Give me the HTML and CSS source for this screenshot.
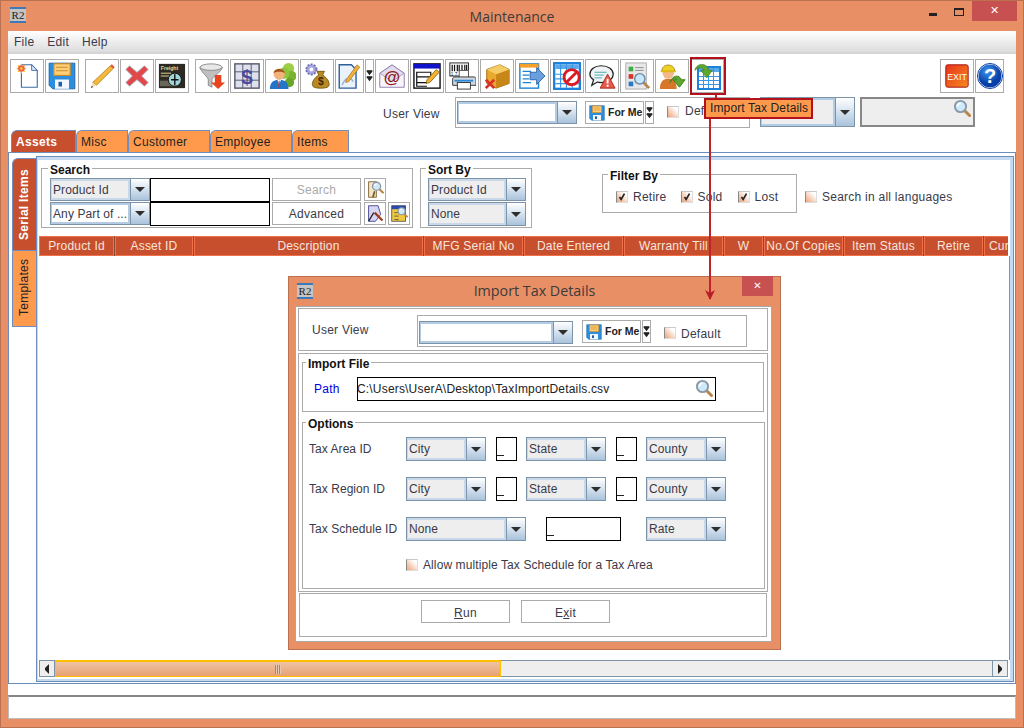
FILE: index.html
```html
<!DOCTYPE html>
<html lang="en">
<head>
<meta charset="utf-8">
<title>Maintenance</title>
<link rel="stylesheet" href="styles.css">
</head>
<body>
<svg class="defs" aria-hidden="true">
  <symbol id="floppy" viewBox="0 0 24 24">
    <path fill="#2b8ede" stroke="#1b63a8" stroke-width=".8" d="M1 1h22v22H4l-3-3z"/>
    <rect x="5" y="1.500" width="14" height="10" fill="#ffcf78" stroke="#c98a2a"/>
    <path stroke="#c98a2a" d="M7 4.500h10M7 7.500h10"/>
    <rect x="6" y="15" width="12" height="8" fill="#f4f8fc"/>
    <rect x="9" y="17" width="3" height="4" fill="#1b5fa8"/>
  </symbol>
  <symbol id="lens" viewBox="0 0 24 24">
    <path stroke="#b9864a" stroke-width="4" stroke-linecap="round" d="M15 15l7 7"/>
    <circle cx="10" cy="10" r="7.500" fill="#cfe9f8" stroke="#8a98a6" stroke-width="2.500"/>
    <path stroke="#fff" stroke-width="2" fill="none" d="M6 10a4 4 0 0 1 4-4"/>
  </symbol>
  <symbol id="dbl" viewBox="0 0 8 14">
    <path fill="#222" d="M0 1h8L4 6zM0 8h8l-4 5z"/>
    <path fill="#222" d="M1 0h6v1H1zM1 7h6v1H1z"/>
  </symbol>
  <symbol id="grid" viewBox="0 0 24 24">
    <rect x="1" y="1" width="22" height="22" fill="#fff" stroke="#1e82dc" stroke-width="2"/>
    <rect x="2" y="2" width="20" height="4" fill="#5aa9ea"/>
    <path stroke="#3b97e6" d="M6.500 2v20M11.500 2v20M16.500 2v20M2 10.500h20M2 14.500h20M2 18.500h20"/>
  </symbol>
  <symbol id="curl" viewBox="0 0 24 24">
    <path fill="#5fa52e" stroke="#3e7d1c" stroke-width=".8" d="M1 10C3 1 15 0 18 10h4l-6.500 9L8 10h4C10 6 5 6 1 10z"/>
  </symbol>
</svg>

<div class="window">
  <header class="titlebar">
    <span class="r2">R<i>2</i></span>
    <h1 class="title">Maintenance</h1>
    <div class="winctl">
      <span class="w-min"></span>
      <span class="w-max"></span>
      <span class="w-close">&#10005;</span>
    </div>
  </header>

  <main class="client">
    <nav class="menu"><span>File</span><span>Edit</span><span>Help</span></nav>

    <div class="toolbar">
      <button class="tb"><svg class="ic" viewBox="0 0 30 30"><path fill="#fff" stroke="#3f6ea8" stroke-width="1.200" d="M9 3h11l6 6v18H9z"/><path fill="#dfe9f6" stroke="#3f6ea8" d="M20 3v6h6z"/><path stroke="#ffb020" stroke-width="1.300" d="M9 2v10M4 7h10M5.500 3.500l7 7M12.500 3.500l-7 7"/><circle cx="9" cy="7" r="3.500" fill="#f4623a"/><circle cx="9" cy="7" r="1.500" fill="#ffc24a"/></svg></button>
      <button class="tb"><svg class="ic" viewBox="0 0 24 24"><use href="#floppy"/></svg></button>
      <button class="tb gap"><svg class="ic" viewBox="0 0 30 30"><path fill="#f6b93a" stroke="#a8741a" stroke-width=".8" d="M24 4l3 3L9 25l-4-3z"/><path fill="#e8472a" d="M24 4l1.500-1.500 3 3L27 7z"/><path fill="#f3dcb8" d="M5 22l4 3-6 3z"/><path fill="#444" d="M3 28l1-2.500 1.500 1.200z"/></svg></button>
      <button class="tb"><svg class="ic" viewBox="0 0 30 30"><path fill="#e2474a" stroke="#a9c0c8" stroke-width="1" stroke-linejoin="round" d="M7 4l8 7 8-7 4 4-7 7 7 7-4 4-8-7-8 7-4-4 7-7-7-7z"/></svg></button>
      <button class="tb"><svg class="ic" viewBox="0 0 30 30"><rect x="1" y="2" width="28" height="26" fill="#2c2a22"/><text x="3" y="9" class="frt">Freight</text><path stroke="#e9dc9a" d="M3 12h11M3 15h9"/><rect x="2" y="20" width="16" height="6" fill="#6b665a"/><circle cx="18" cy="19" r="7" fill="#9fd4d8" stroke="#111"/><path stroke="#111" stroke-width="1.500" d="M18 13v12M14 19h8"/></svg></button>
      <button class="tb gap"><svg class="ic" viewBox="0 0 30 30"><ellipse cx="14" cy="6" rx="12" ry="4" fill="#e8e8e8" stroke="#8a8a8a"/><path fill="#bfbfbf" stroke="#8a8a8a" d="M2 6c3 7 8 9 9 13v6l4 2v-8c1-4 8-6 11-13-4 4-20 4-24 0z"/><path fill="#e8441e" d="M18 14h7v8h4l-7.500 7-7.500-7h4z"/></svg></button>
      <button class="tb"><svg class="ic" viewBox="0 0 30 30"><rect x="2" y="2" width="26" height="26" fill="#dfe0ee" stroke="#55556a" stroke-width="1.500"/><path stroke="#55556a" d="M10.500 2v26M19.500 2v26M2 10.500h26M2 19.500h26"/><text x="15" y="24" class="dollar">$</text></svg></button>
      <button class="tb"><svg class="ic" viewBox="0 0 30 30"><circle cx="22" cy="7" r="6" fill="#9ccf45"/><circle cx="25" cy="15" r="5.500" fill="#77b52f"/><circle cx="17" cy="12" r="6" fill="#8cc63f"/><circle cx="23" cy="22" r="5" fill="#6aa728"/><path fill="#2474c8" d="M2 29c0-8 5-10 10-10s10 2 10 10z"/><path fill="#fff" d="M10 19h4l-2 5z"/><path fill="#d8362a" d="M11.500 20h1l.5 7h-2z"/><circle cx="12" cy="13" r="6" fill="#f2b27c"/><path fill="#a3561c" d="M6 12c0-6 12-6 12 0-3-2-9-2-12 0z"/></svg></button>
      <button class="tb"><svg class="ic" viewBox="0 0 30 30"><circle cx="9" cy="8" r="5.500" fill="#a9a7e0" stroke="#6d6bb0" stroke-width="2" stroke-dasharray="2 1.500"/><circle cx="9" cy="8" r="2" fill="#fff"/><path fill="#b98a24" stroke="#7a5a10" d="M15 10h8l-2 4c5 3 7 7 7 10 0 3-3 4-9 4s-9-1-9-4c0-3 2-7 7-10z"/><text x="19" y="25" class="bag">$</text></svg></button>
      <button class="tb narrow"><svg class="ic" viewBox="0 0 26 30"><path fill="#eaf2fb" stroke="#2c5f9e" stroke-width="1.500" d="M2 3h13l5 5v20H2z"/><path fill="none" stroke="#9cb4cc" stroke-width="1.500" d="M5 25c4-10 10-8 12-4"/><path fill="#f0b03a" stroke="#9c6a14" stroke-width=".7" d="M21 3l3 2.500L12 21l-3 1 .5-3z"/></svg></button>
      <button class="tb arrow"><svg class="ic-dbl" viewBox="0 0 8 14"><use href="#dbl"/></svg></button>
      <button class="tb"><svg class="ic" viewBox="0 0 30 30"><path fill="#e3dcef" stroke="#7a6a9c" d="M2 12L15 3l13 9v15H2z"/><path fill="#f7f4fb" stroke="#a69ac0" d="M2 12l13 9 13-9v15H2z"/><text x="15" y="23" class="at">@</text></svg></button>
      <button class="tb"><svg class="ic" viewBox="0 0 30 30"><rect x="1" y="2" width="28" height="26" fill="#fff" stroke="#111" stroke-width="1.500"/><rect x="1" y="2" width="28" height="5" fill="#1212c8"/><path fill="none" stroke="#111" stroke-width="1.300" d="M4 11h15v5H4zM4 16v6h11M4 22v4h11"/><path fill="#f3b32e" stroke="#7a5206" stroke-width=".8" d="M25 8l3 3-10 11-4 1 1-4z"/></svg></button>
      <button class="tb"><svg class="ic" viewBox="0 0 30 30"><rect x="2" y="1" width="20" height="14" fill="#fff" stroke="#222"/><path stroke="#111" stroke-width="1.300" d="M4.500 3v7M7 3v7M10 3v7M12 3v7M15 3v7M18 3v7M20 3v7"/><text x="3" y="15" class="mini">1 7</text><rect x="12" y="9" width="10" height="10" fill="#fff" stroke="#555"/><path fill="#cfd6de" stroke="#333" d="M7 16h21c1 0 2 1 2 2v7H5v-7c0-1 1-2 2-2z"/><rect x="10" y="22" width="14" height="7" fill="#fff" stroke="#333"/><rect x="7" y="19" width="20" height="2" fill="#2a8ad8"/></svg></button>
      <button class="tb"><svg class="ic" viewBox="0 0 30 30"><path fill="#e8a92e" stroke="#9c6e10" d="M4 8l14-5 10 5v15L14 28 4 23z"/><path fill="#c98618" d="M14 13l14-5v15L14 28z"/><path fill="#f6cc66" d="M4 8l10 5 14-5-10-5z"/><path stroke="#d8322a" stroke-width="3" d="M3 19l9 9M12 19l-9 9"/></svg></button>
      <button class="tb"><svg class="ic" viewBox="0 0 30 30"><rect x="2" y="2" width="20" height="26" fill="#fff" stroke="#1e82d2" stroke-width="1.500"/><rect x="2" y="2" width="20" height="4" fill="#f5a028"/><path stroke="#1e82d2" stroke-width="1.300" d="M5 10h9M5 14h7M5 18h7M5 22h9"/><path fill="#6aa0e0" stroke="#2c63a8" d="M13 11h7V6l9 9-9 9v-5h-7z"/></svg></button>
      <button class="tb"><svg class="ic" viewBox="0 0 24 24"><use href="#grid"/><circle cx="16" cy="13" r="6.500" fill="#fff" stroke="#dc1c24" stroke-width="2.500"/><path stroke="#dc1c24" stroke-width="2.500" d="M12 17l8-8"/></svg></button>
      <button class="tb"><svg class="ic" viewBox="0 0 30 30"><path fill="#eef3f7" stroke="#222" stroke-width="1.300" d="M14 4c8 0 13 4 13 9s-5 9-13 9c-2 0-3 0-4-.5L4 25l2-6c-3-2-4-4-4-6 0-5 5-9 12-9z"/><path stroke="#4aa8a8" d="M7 11h13M7 14h10M7 17h8"/><path fill="#e85a4a" stroke="#a82a1a" d="M21 13l8 15H13z"/><path stroke="#fff" stroke-width="2" d="M21 18v5M21 24.500v2"/></svg></button>
      <button class="tb"><svg class="ic" viewBox="0 0 30 30"><rect x="3" y="1" width="22" height="28" fill="#e8e8e8" stroke="#aaa"/><rect x="6" y="5" width="5" height="5" fill="#3fae49"/><rect x="6" y="13" width="5" height="5" fill="#d8342a"/><rect x="6" y="21" width="5" height="5" fill="#2a7ac8"/><path stroke="#8a8a8a" d="M13 6h9M13 9h9M13 14h5M13 22h5"/><path stroke="#b9864a" stroke-width="3" d="M22 22l6 6"/><circle cx="18" cy="18" r="5.500" fill="#c8e8fa" stroke="#6a8aa8" stroke-width="1.500"/></svg></button>
      <button class="tb"><svg class="ic" viewBox="0 0 30 30"><path fill="#d8762a" d="M2 29c0-8 4-11 9-11s9 3 9 11z"/><circle cx="11" cy="12" r="6" fill="#f2b88a"/><path fill="#f0d028" stroke="#a88a10" d="M4 10c0-9 14-9 14 0z"/><rect x="3" y="9" width="16" height="2" fill="#e0b818"/><path fill="#5fa52e" stroke="#3e7d1c" d="M13 22c2-8 10-9 12-3h4l-6 8-7-8h4c-2-2-5-1-7 3z"/></svg></button>
      <button class="tb"><svg class="ic" viewBox="0 0 28 28"><svg x="4" y="4" width="24" height="24"><use href="#grid"/></svg><svg x="0" y="0" width="22" height="20"><use href="#curl"/></svg></svg></button>
      <div class="tb-right">
        <button class="tb"><svg class="ic" viewBox="0 0 30 30"><defs><linearGradient id="ex" x1="0" y1="0" x2="1" y2="1"><stop offset="0" stop-color="#e8341c"/><stop offset="1" stop-color="#f58a20"/></linearGradient></defs><rect x="3" y="3" width="24" height="24" rx="2" fill="url(#ex)" stroke="#a01010"/><text x="15" y="19" class="exit">EXIT</text></svg></button>
        <button class="tb help"><svg class="ic-help" viewBox="0 0 26 26"><defs><radialGradient id="hp" cx=".4" cy=".3"><stop offset="0" stop-color="#3a9af0"/><stop offset="1" stop-color="#0a3fa8"/></radialGradient></defs><circle cx="13" cy="13" r="12" fill="url(#hp)" stroke="#fff" stroke-width="1"/><circle cx="13" cy="13" r="12.500" fill="none" stroke="#0a3fa8" stroke-width="1"/><text x="13" y="20" class="qm">?</text></svg></button>
      </div>
    </div>

    <div class="viewrow">
      <span class="lbl uv">User View</span>
      <div class="viewbox vb-main">
        <div class="combo edit w120 h23"><span class="val"></span><span class="drop"></span></div>
        <div class="forme fm-main"><svg class="fl" viewBox="0 0 24 24"><use href="#floppy"/></svg><b>For Me</b></div>
        <div class="fm-arrow"><svg class="ic-dbl" viewBox="0 0 8 14"><use href="#dbl"/></svg></div>
        <span class="chk c-main"></span><span class="lbl">Default</span>
      </div>
      <div class="combo dis w95 h30"><span class="val"></span><span class="drop"></span></div>
      <div class="lookup"><svg class="lk" viewBox="0 0 24 24"><use href="#lens"/></svg></div>
    </div>

    <div class="tabs">
      <span class="tab t-on t65">Assets</span>
      <span class="tab t52">Misc</span>
      <span class="tab t82">Customer</span>
      <span class="tab t82">Employee</span>
      <span class="tab t57">Items</span>
    </div>

    <section class="panel">
      <aside class="side">
        <span class="stab s-on">Serial Items</span>
        <span class="stab s-off">Templates</span>
      </aside>
      <div class="content">
        <div class="inner">
          <div class="filters">
            <div class="group g-search">
              <span class="legend">Search</span>
              <div class="srow">
                <div class="combo w100 h23"><span class="val">Product Id</span><span class="drop"></span></div>
                <div class="field f120"></div>
                <button class="btn b-search muted">Search</button>
                <button class="mini-ic"><svg class="ic-s" viewBox="0 0 22 22"><path fill="#f4e4c8" stroke="#7a5a2a" d="M3 2h9v18H3z"/><path stroke="#7a5a2a" stroke-width="2" d="M8 20l2-7"/><svg x="6" y="1" width="15" height="15"><use href="#lens"/></svg></svg></button>
              </div>
              <div class="srow">
                <div class="combo edit w100 h23 c-any"><span class="val">Any Part of ...</span><span class="drop"></span></div>
                <div class="field f120"></div>
                <button class="btn b-search">Advanced</button>
                <button class="mini-ic"><svg class="ic-s" viewBox="0 0 22 22"><path fill="#d8d4f4" stroke="#3a3a8a" d="M3 2h11l3 10-6 8H3z"/><path stroke="#9a3a1a" stroke-width="2.500" d="M10 10l9 9"/><path stroke="#222" stroke-width="1.500" d="M3 20l6-10"/></svg></button>
                <button class="mini-ic"><svg class="ic-s" viewBox="0 0 22 22"><rect x="2" y="2" width="16" height="18" fill="#f0c83a" stroke="#555"/><rect x="2" y="2" width="16" height="4" fill="#2a4ab0"/><path stroke="#555" d="M5 10h5M5 14h5M5 18h5"/><svg x="8" y="3" width="13" height="13"><use href="#lens"/></svg></svg></button>
              </div>
            </div>
            <div class="group g-sort">
              <span class="legend">Sort By</span>
              <div class="combo w98 h23"><span class="val">Product Id</span><span class="drop"></span></div>
              <div class="combo w98 h24"><span class="val">None</span><span class="drop"></span></div>
            </div>
            <div class="group g-filter">
              <span class="legend">Filter By</span>
              <span class="chk on c-a"><svg viewBox="0 0 12 12"><path d="M3 6l2 3 4-7" fill="none" stroke="#222" stroke-width="2"/></svg></span><span class="lbl">Retire</span>
              <span class="chk on c-b"><svg viewBox="0 0 12 12"><path d="M3 6l2 3 4-7" fill="none" stroke="#222" stroke-width="2"/></svg></span><span class="lbl">Sold</span>
              <span class="chk on c-b2"><svg viewBox="0 0 12 12"><path d="M3 6l2 3 4-7" fill="none" stroke="#222" stroke-width="2"/></svg></span><span class="lbl">Lost</span>
            </div>
            <div class="alllang"><span class="chk"></span><span class="lbl">Search in all languages</span></div>
          </div>

          <div class="thead">
            <span class="th c75">Product Id</span>
            <span class="th c78">Asset ID</span>
            <span class="th c229">Description</span>
            <span class="th c99">MFG Serial No</span>
            <span class="th c99">Date Entered</span>
            <span class="th c99">Warranty Till</span>
            <span class="th c39">W</span>
            <span class="th c79">No.Of Copies</span>
            <span class="th c79">Item Status</span>
            <span class="th c59">Retire</span>
            <span class="th c24">Cur</span>
          </div>
          <div class="tbody"></div>
          <div class="hscroll">
            <span class="sbtn"><i class="tri-l"></i></span>
            <span class="thumb"><i class="grip"></i></span>
            <span class="track"></span>
            <span class="sbtn"><i class="tri-r"></i></span>
          </div>
        </div>
      </div>
    </section>

    <div class="status"></div>
  </main>
</div>

<div class="dlg">
  <header class="dlg-title">
    <span class="r2">R<i>2</i></span>
    <h2 class="dlg-name">Import Tax Details</h2>
    <span class="dlg-close">&#10005;</span>
  </header>
  <div class="dlg-inner">
    <div class="p1">
      <span class="lbl p1-lbl">User View</span>
      <div class="viewbox vb-dlg">
        <div class="combo edit w154 h23"><span class="val"></span><span class="drop"></span></div>
        <div class="forme fm-dlg"><svg class="fl" viewBox="0 0 24 24"><use href="#floppy"/></svg><b>For Me</b></div>
        <div class="fm-arrow"><svg class="ic-dbl" viewBox="0 0 8 14"><use href="#dbl"/></svg></div>
        <span class="chk c-dlg"></span><span class="lbl low">Default</span>
      </div>
    </div>
    <div class="p2">
      <div class="group g-import">
        <span class="legend">Import File</span>
        <span class="lbl path">Path</span>
        <div class="field f-path"><span class="path-val">C:\Users\UserA\Desktop\TaxImportDetails.csv</span><svg class="lk2" viewBox="0 0 24 24"><use href="#lens"/></svg></div>
      </div>
      <div class="group g-opts">
        <span class="legend">Options</span>
        <div class="orow">
          <span class="lbl ol">Tax Area ID</span>
          <div class="combo w80 h24"><span class="val">City</span><span class="drop"></span></div>
          <div class="field f21 m10"></div>
          <div class="combo w80 h24 m9"><span class="val">State</span><span class="drop"></span></div>
          <div class="field f21 m10"></div>
          <div class="combo w80 h24 m9"><span class="val">County</span><span class="drop"></span></div>
        </div>
        <div class="orow">
          <span class="lbl ol">Tax Region ID</span>
          <div class="combo w80 h24"><span class="val">City</span><span class="drop"></span></div>
          <div class="field f21 m10"></div>
          <div class="combo w80 h24 m9"><span class="val">State</span><span class="drop"></span></div>
          <div class="field f21 m10"></div>
          <div class="combo w80 h24 m9"><span class="val">County</span><span class="drop"></span></div>
        </div>
        <div class="orow">
          <span class="lbl ol">Tax Schedule ID</span>
          <div class="combo w120b h24"><span class="val">None</span><span class="drop"></span></div>
          <div class="field f75 m20"></div>
          <div class="combo w80 h24 m25"><span class="val">Rate</span><span class="drop"></span></div>
        </div>
        <div class="orow-chk"><span class="chk"></span><span class="lbl">Allow multiple Tax Schedule for a Tax Area</span></div>
      </div>
    </div>
    <div class="p3">
      <button class="btn b-dlg"><u>R</u>un</button>
      <button class="btn b-dlg">E<u>x</u>it</button>
    </div>
  </div>
</div>

<svg class="leader" viewBox="0 0 30 210" aria-hidden="true">
  <path stroke="#c0232c" stroke-width="2" d="M17 0v6M11 20v184"/>
  <path fill="#b81c26" d="M6 195l5 3 5-3-5 10z"/>
</svg>
<div class="hl-frame"></div>
<div class="hl-tip">Import Tax Details</div>
</body>
</html>
```

FILE: styles.css
```css
* { box-sizing: border-box; }
html, body { margin: 0; padding: 0; }
body {
  width: 1024px; height: 728px; overflow: hidden; position: relative;
  font: 12px/1 "Liberation Sans", Arial, sans-serif; color: #3a3a48;
}
.defs { width: 0; height: 0; position: absolute; }
button { font: inherit; color: inherit; margin: 0; padding: 0; background: #fff; cursor: default; }
h1, h2 { margin: 0; font-weight: 400; }

.window {
  width: 1024px; height: 728px; display: flex; flex-direction: column;
  background: #e98f66; border: 1px solid #b9714f; padding: 0 7px 8px;
}
.titlebar { height: 30px; margin: 0 -7px; position: relative; display: flex; align-items: center; justify-content: center; flex: none; }
.r2 {
  position: absolute; left: 9px; top: 6px; width: 16px; height: 16px;
  background: #c4c4c4; border-top: 2px solid #3f78b8; border-bottom: 2px solid #3f78b8;
  font: 11px/12px "Liberation Serif", serif; color: #222; text-align: center;
}
.r2 i { font-style: normal; }
.title { font: 14px "Open Sans", sans-serif; color: #3b3b3b; }
.winctl { position: absolute; right: 6px; top: 0; display: flex; align-items: flex-start; }
.w-min { width: 8px; height: 3px; background: #222; margin: 12px 17px 0 0; }
.w-max { width: 10px; height: 8px; border: 1px solid #222; border-top-width: 2px; margin: 7px 8px 0 0; }
.w-close { width: 45px; height: 20px; background: #c75050; color: #fff; text-align: center; font: bold 11px/20px "DejaVu Sans", sans-serif; }

.client { flex: 1; background: #fff; display: flex; flex-direction: column; min-height: 0; }
.menu {
  height: 23px; flex: none; display: flex; gap: 0; padding-left: 6px; align-items: center;
  background: linear-gradient(#fff, #dcdcdc); border-bottom: 2px solid #d4d4d4;
}
.menu span { margin-right: 13px; letter-spacing: .25px; }

.toolbar { display: flex; gap: 1px; padding: 5px 12px 0 2px; flex: none; height: 39px; }
.tb { width: 34px; height: 34px; border: 1px solid #ababab; display: flex; align-items: center; justify-content: center; flex: none; }
.tb.gap { margin-left: 5px; }
.tb.narrow { width: 29px; }
.tb.arrow { width: 9px; }
.tb.help { width: 29px; }
.tb-right { margin-left: auto; display: flex; gap: 1px; }
.ic { width: 28px; height: 28px; display: block; }
.ic-help { width: 26px; height: 26px; }
.ic-dbl { width: 7px; height: 12px; display: block; }
.ic-s { width: 19px; height: 19px; display: block; }
.frt { font: bold 5.500px "Liberation Sans", sans-serif; fill: #e9dc9a; }
.dollar { font: bold 22px "Liberation Sans", sans-serif; fill: #4a4a9a; text-anchor: middle; }
.bag { font: bold 11px "Liberation Sans", sans-serif; fill: #3a2a08; text-anchor: middle; }
.at { font: bold 18px "Liberation Sans", sans-serif; fill: #8e1c1c; text-anchor: middle; }
.mini { font: 5px "Liberation Sans", sans-serif; fill: #111; }
.exit { font: 9.500px "Liberation Sans", sans-serif; fill: #fff; text-anchor: middle; }
.qm { font: bold 20px "Liberation Sans", sans-serif; fill: #fff; text-anchor: middle; }

.lbl { letter-spacing: .25px; white-space: nowrap; }

.viewrow { display: flex; height: 33px; margin-top: 4px; flex: none; align-items: flex-start; }
.uv { margin: 11px 8px 0 375px; width: 64px; }
.viewbox { border: 1px solid #ababab; display: flex; align-items: flex-start; }
.vb-main { width: 295px; height: 31px; padding: 3px 0 0 1px; }
.vb-dlg { width: 330px; height: 32px; padding: 5px 0 0 1px; }
.forme {
  width: 59px; height: 23px; border: 1px solid #ababab; display: flex; align-items: center; padding-left: 3px; gap: 3px;
  font-size: 10.500px; color: #222; white-space: nowrap; overflow: hidden;
}
.fm-main { margin-left: 8px; }
.fm-dlg { margin: -1px 0 0 9px; }
.fl { width: 16px; height: 16px; flex: none; }
.fm-arrow { width: 9px; height: 23px; border: 1px solid #ababab; margin-left: 1px; display: flex; align-items: center; justify-content: center; }
.fm-dlg + .fm-arrow { margin-top: -1px; }
.vb-main .lbl { margin: 4px 0 0 6px; }
.low { margin: 7px 0 0 5px; }
.chk {
  width: 12px; height: 12px; display: block; flex: none;
  background: linear-gradient(45deg, #eda47a, #fff 80%);
  border-left: 1px solid #8a8a8a; border-top: 1px solid #c8c8c8; border-right: 1px solid #ddd; border-bottom: 1px solid #ddd;
}
.chk svg { display: block; width: 10px; height: 10px; }
.c-main { margin: 5px 0 0 13px; }
.c-dlg { margin: 6px 0 0 13px; }

.combo { display: flex; border: 1px solid #7d93a8; background: #eee; flex: none; }
.combo .val {
  flex: 1; min-width: 0; border: 2px solid #c9d8e8; border-left-width: 1px; padding-left: 1px; display: flex; align-items: center;
  letter-spacing: .1px; white-space: nowrap; overflow: hidden;
}
.combo.edit { background: #fff; }
.combo.edit .val { border-color: #b4cbe4; }
.combo.dis .val { border-color: #b4cbe4; }
.combo .drop {
  width: 19px; flex: none; border-left: 1px solid #7d93a8; background: linear-gradient(#fff, #a9c3dc);
  display: flex; align-items: center; justify-content: center;
}
.combo .drop::after { content: ""; border: 5px solid transparent; border-top: 5px solid #2e2e2e; border-bottom: 0; }
.w80 { width: 80px; } .w95 { width: 95px; } .w98 { width: 98px; } .w100 { width: 100px; }
.w120 { width: 120px; } .w120b { width: 120px; } .w154 { width: 154px; }
.h23 { height: 23px; } .h24 { height: 24px; } .h30 { height: 30px; }
.viewrow .w95 { margin-left: 10px; }
.lookup { width: 115px; height: 30px; margin-left: 5px; background: #eee; border: 2px solid #888; position: relative; display: flex; justify-content: flex-end; }
.lk { width: 18px; height: 18px; margin-right: 2px; }

.tabs { height: 22px; display: flex; padding-left: 3px; flex: none; }
.tab {
  border: 1px solid #6f8fc0; border-bottom: 0; border-left-width: 1px; border-radius: 6px 0 0 0;
  background: #ff9a4d; color: #222; padding: 5px 0 0 4px; letter-spacing: .3px; height: 22px; white-space: nowrap;
}
.t-on { background: #c84f2e; color: #fff; font-weight: 700; padding-left: 4px; }
.t65 { width: 65px; } .t52 { width: 52px; } .t82 { width: 82px; } .t57 { width: 57px; }

.panel { flex: none; height: 532px; border: 1px solid #6b8dbb; display: flex; background: #fff; }
.side { width: 27px; padding: 5px 0 0 3px; display: flex; flex-direction: column; flex: none; }
.stab {
  writing-mode: vertical-rl; transform: rotate(180deg); width: 24px; text-align: center;
  border: 1px solid #6f8fc0; border-left: 0; border-radius: 0 0 6px 0; letter-spacing: .3px; line-height: 22px;
}
.s-on { height: 93px; background: #c84f2e; color: #fff; font-weight: 700; position: relative; z-index: 1; }
.s-off { height: 80px; margin-top: -4px; background: #ff9a4d; color: #222; }
.content {
  flex: 1; margin: 3px 1px 1px 0; border: 1px solid #6b8dbb; background: #c5d9f0; padding: 3px 3px 2px 1px;
  display: flex; min-width: 0;
}
.inner { flex: 1; background: #fff; display: flex; flex-direction: column; min-width: 0; }
.filters { height: 76px; display: flex; align-items: flex-start; flex: none; }
.group { border: 1px solid #ababab; position: relative; flex: none; }
.legend {
  position: absolute; left: 5px; top: -5px; background: #fff; padding: 0 2px; font-weight: 700; color: #111; line-height: 12px;
}
.g-search { width: 372px; height: 60px; margin: 8px 0 0 3px; padding: 9px 0 0 8px; }
.g-search .legend { left: 6px; }
.srow { display: flex; align-items: flex-start; }
.field { border: 1px solid #000; background: #fff; flex: none; color: #222; }
.f120 { width: 120px; height: 24px; }
.btn { border: 1px solid #ababab; flex: none; text-align: center; letter-spacing: .25px; }
.b-search { width: 89px; height: 23px; margin-left: 2px; }
.muted { color: #aaa; }
.mini-ic { width: 22px; height: 23px; border: 1px solid #ababab; margin-left: 3px; display: flex; align-items: center; justify-content: center; flex: none; }
.mini-ic + .mini-ic { margin-left: 2px; }
.g-sort { width: 112px; height: 60px; margin: 8px 0 0 7px; padding: 9px 0 0 7px; display: flex; flex-direction: column; gap: 1px; }
.g-filter { width: 195px; height: 39px; margin: 14px 0 0 70px; padding-top: 7px; display: flex; align-items: center; }
.g-filter .lbl { margin-left: 5px; }
.c-a { margin-left: 13px; }
.c-b { margin-left: 14px; }
.c-b2 { margin-left: 15px; }
.alllang { display: flex; margin: 31px 0 0 8px; align-items: center; gap: 5px; }

.thead { height: 20px; margin-left: 1px; width: 969px; display: flex; gap: 1px; background: #8a4a36; flex: none; overflow: hidden; }
.th {
  background: #c84f2e; border: 1px solid #f0704a; color: #f6e6de; text-align: center; line-height: 18px; flex: none;
  letter-spacing: .2px; white-space: nowrap; overflow: hidden;
}
.c75 { width: 75px; } .c78 { width: 78px; } .c229 { width: 229px; } .c99 { width: 99px; }
.c39 { width: 39px; } .c79 { width: 79px; } .c59 { width: 59px; }
.c24 { width: 24px; border-right: 0; text-align: left; padding-left: 4px; }
.tbody { flex: 1; min-height: 0; margin-left: 1px; width: 971px; border-right: 1px solid #7d93a8; background: #fff; }
.hscroll { height: 17px; margin: 0 2px 2px 1px; display: flex; border-top: 1px solid #7d93a8; border-bottom: 1px solid #7d93a8; flex: none; }
.sbtn { width: 16px; background: #eee; border-left: 1px solid #7d93a8; border-right: 1px solid #7d93a8; display: flex; align-items: center; justify-content: center; flex: none; }
.tri-l { border: 4px solid transparent; border-right: 4px solid #222; border-left: 0; height: 10px; }
.tri-r { border: 4px solid transparent; border-left: 4px solid #222; border-right: 0; height: 10px; }
.thumb {
  width: 446px; margin-top: -1px; margin-bottom: -1px; flex: none; border: 1px solid #ffbf00; border-top-width: 2px;
  background: linear-gradient(#eec3a3, #e8a173); display: flex; align-items: center; justify-content: center;
}
.grip { width: 6px; height: 9px; background: repeating-linear-gradient(90deg, #8a8ab0 0 1px, #e8c8b0 1px 2px); }
.track { flex: 1; background: #eee; }

.status { margin-top: 11px; height: 24px; flex: none; border: 1px solid #bdbdbd; border-top: 2px solid #868686; background: #fff; }

.dlg {
  position: absolute; left: 288px; top: 276px; width: 493px; height: 374px; background: #e98f66;
  border: 1px solid #b9714f; padding: 0 8px 7px 6px; display: flex; flex-direction: column;
}
.dlg-title { height: 29px; margin: 0 -8px 0 -6px; padding-bottom: 2px; position: relative; display: flex; justify-content: center; align-items: center; flex: none; }
.dlg-title .r2 { left: 8px; top: 6px; }
.dlg-name { font: 14.300px "Open Sans", sans-serif; color: #3b3b3b; }
.dlg-close { position: absolute; right: 7px; top: -1px; width: 31px; height: 20px; background: #c75050; color: #fff; text-align: center; font: bold 10px/20px "DejaVu Sans", sans-serif; }
.dlg-inner { flex: 1; background: #fff; border: 1px solid #a8a8a8; padding: 1px 3px 4px 2px; display: flex; flex-direction: column; }
.p1 { height: 43px; border: 1px solid #ababab; display: flex; padding-top: 6px; flex: none; }
.p1-lbl { margin: 9px 0 0 13px; width: 105px; }
.p2 { height: 239px; margin-top: 2px; border: 1px solid #ababab; padding: 8px 0 0 3px; flex: none; }
.g-import { width: 462px; height: 50px; display: flex; align-items: flex-start; padding-top: 14px; }
.g-import .legend, .g-opts .legend { left: 3px; }
.path { color: #0000e0; margin: 6px 0 0 11px; width: 43px; }
.f-path { width: 359px; height: 24px; display: flex; align-items: center; justify-content: space-between; padding: 0 2px 0 0; letter-spacing: .18px; }
.path-val { margin-left: -1px; }
.lk2 { width: 18px; height: 18px; margin-top: -3px; }
.g-opts { width: 463px; height: 167px; margin-top: 10px; padding: 14px 0 0 6px; }
.orow { display: flex; align-items: flex-start; height: 24px; margin-bottom: 16px; }
.ol { width: 97px; margin-top: 6px; flex: none; letter-spacing: .05px; }
.f21 { width: 21px; height: 24px; }
.f75 { width: 75px; height: 24px; }
.f21::after, .f75::after { content: ""; display: block; width: 7px; height: 1px; margin-top: 17px; background: #222; }
.m9 { margin-left: 9px; } .m10 { margin-left: 10px; } .m20 { margin-left: 20px; } .m25 { margin-left: 25px; }
.orow-chk { display: flex; align-items: center; gap: 5px; padding-top: 2px; margin-left: 97px; }
.orow-chk .lbl { letter-spacing: .1px; }
.p3 { height: 44px; margin: 1px 0 0 1px; width: 468px; border: 1px solid #ababab; display: flex; gap: 11px; padding: 6px 0 0 121px; flex: none; }
.b-dlg { width: 89px; height: 23px; padding-top: 2px; }

.leader { position: absolute; left: 699px; top: 95px; width: 30px; height: 210px; }
.hl-frame { position: absolute; left: 690px; top: 57px; width: 36px; height: 38px; border: 2px solid #b3121d; }
.hl-tip {
  position: absolute; left: 704px; top: 98px; width: 109px; height: 21px; background: #ff9a4d; border: 2px solid #b3121d;
  color: #222; padding-left: 4px; line-height: 17px; letter-spacing: .13px; white-space: nowrap;
}
```
